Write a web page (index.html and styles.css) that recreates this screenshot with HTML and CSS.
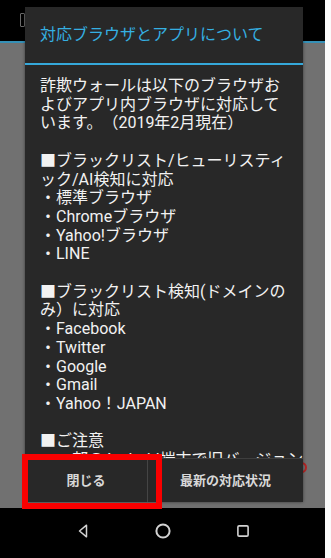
FILE: index.html
```html
<!DOCTYPE html>
<html lang="ja">
<head>
<meta charset="utf-8">
<title>対応ブラウザとアプリについて</title>
<link rel="stylesheet" href="styles.css">
</head>
<body>
<div class="page">
  <div class="screen">
    <header class="appbar"><span class="applogo"></span></header>
    <main class="content"></main>
    <nav class="navbar">
      <span class="navcell">
        <svg width="10" height="14" viewBox="0 0 10 14"><path d="M8.5 1.2 L1.5 7 L8.5 12.8 Z" fill="none" stroke="#d2d2d2" stroke-width="1.5" stroke-linejoin="round"/></svg>
      </span>
      <span class="navcell">
        <svg width="16" height="16" viewBox="0 0 16 16"><circle cx="8" cy="8" r="6.6" fill="none" stroke="#d2d2d2" stroke-width="2"/></svg>
      </span>
      <span class="navcell">
        <svg width="12" height="12" viewBox="0 0 12 12"><rect x="0.9" y="0.9" width="10.2" height="10.2" rx="1.2" fill="none" stroke="#d2d2d2" stroke-width="1.6"/></svg>
      </span>
    </nav>
    <span class="redmark"></span>
    <section class="dialog">
      <h1 class="dialog-title">対応ブラウザとアプリについて</h1>
      <div class="dialog-body">
        <p class="intro">詐欺ウォールは以下のブラウザお<br>よびアプリ内ブラウザに対応して<br>います。（2019年2月現在）</p>
        <p>■ブラックリスト/ヒューリスティック/AI検知に対応</p>
        <ul class="list">
          <li>・標準ブラウザ</li>
          <li>・Chromeブラウザ</li>
          <li>・Yahoo!ブラウザ</li>
          <li>・LINE</li>
        </ul>
        <p>■ブラックリスト検知(ドメインのみ）に対応</p>
        <ul class="list">
          <li>・Facebook</li>
          <li>・Twitter</li>
          <li>・Google</li>
          <li>・Gmail</li>
          <li>・Yahoo！JAPAN</li>
        </ul>
        <p>■ご注意</p>
        <ul class="list">
          <li class="cut">・一部のAndroid端末で旧バージョン</li>
        </ul>
      </div>
      <div class="dialog-buttons">
        <button class="btn">閉じる</button>
        <button class="btn btn-split">最新の対応状況</button>
      </div>
    </section>
    <div class="highlight"></div>
  </div>
  <div class="edge"></div>
</div>
</body>
</html>
```

FILE: styles.css
```css
* { box-sizing: border-box; }

html, body {
  margin: 0;
  padding: 0;
  background: #ffffff;
}

body {
  width: 331px;
  height: 558px;
  overflow: hidden;
  font-family: Roboto, "Noto Sans CJK JP", "Noto Sans", sans-serif;
}

.page {
  display: flex;
  height: 558px;
}

.screen {
  position: relative;
  width: 325px;
  height: 558px;
  display: flex;
  flex-direction: column;
  background: #717171;
}

.edge {
  flex: 1;
  background: #fbfbfb;
}

.appbar {
  height: 43px;
  background: #000;
  border-bottom: 2px solid #3590b6;
  padding: 13px 0 0 20px;
}

.applogo {
  display: block;
  width: 5px;
  height: 14px;
  border: 1px solid #6a6a6a;
  border-radius: 1px;
}

.content {
  flex: 1;
}

.navbar {
  height: 50px;
  background: #000;
  display: flex;
  justify-content: center;
  align-items: center;
  padding-bottom: 4px;
}

.navcell {
  width: 80px;
  display: flex;
  justify-content: center;
  align-items: center;
}

.navcell svg { display: block; }

.redmark {
  position: absolute;
  left: 296px;
  top: 462px;
  width: 11px;
  height: 11px;
  border: 2px solid #b52424;
  border-radius: 50%;
}

.dialog {
  position: absolute;
  left: 25px;
  top: 7px;
  width: 278px;
  height: 495px;
  background: #282828;
  display: flex;
  flex-direction: column;
  box-shadow: 0 0 3px rgba(0, 0, 0, 0.5);
}

.dialog-title {
  margin: 0;
  height: 58px;
  padding: 0 0 5px 15px;
  display: flex;
  align-items: center;
  font-size: 16px;
  font-weight: normal;
  color: #35b0e2;
  border-bottom: 2px solid #35a8da;
}

.dialog-body {
  flex: 1;
  overflow: hidden;
  padding: 12px 13px 0 15px;
  color: #f2f2f2;
  font-size: 16px;
  line-height: 18.7px;
  line-break: normal;
  text-spacing-trim: space-all;
}

.dialog-body p {
  margin: 0;
}

.dialog-body .intro {
  white-space: nowrap;
  margin-bottom: 18.7px;
}

.list {
  list-style: none;
  margin: 0 0 18.7px;
  padding: 0;
}

.cut {
  white-space: nowrap;
}

.dialog-buttons {
  height: 44px;
  display: grid;
  grid-template-columns: 122px 1fr;
  border-top: 1px solid #3e3e3e;
  background: #282828;
}

.btn {
  border: 0;
  margin: 0;
  padding: 0 0 2px;
  background: transparent;
  color: #d8d8d8;
  font-family: Roboto, "Noto Sans CJK JP", sans-serif;
  font-size: 13px;
  font-weight: 700;
}

.btn-split {
  border-left: 1px solid #454545;
}

.highlight {
  position: absolute;
  left: 22px;
  top: 454px;
  width: 140px;
  height: 55px;
  border: 6px solid #fa0000;
}
```
